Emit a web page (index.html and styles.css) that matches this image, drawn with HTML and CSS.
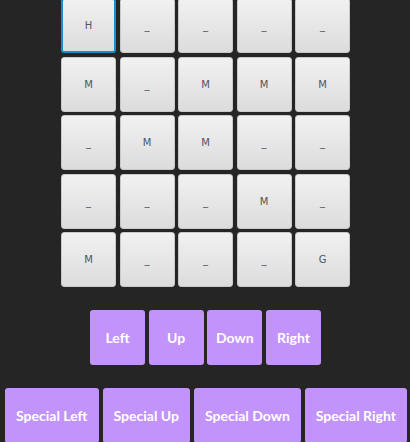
FILE: index.html
```html
<!DOCTYPE html>
<html>
<head>
<meta charset="utf-8">
<link rel="stylesheet" href="styles.css">
</head>
<body>
<div class="app">
  <div class="board">
    <div class="tile active">H</div>
    <div class="tile">_</div>
    <div class="tile">_</div>
    <div class="tile">_</div>
    <div class="tile">_</div>
    <div class="tile">M</div>
    <div class="tile">_</div>
    <div class="tile">M</div>
    <div class="tile">M</div>
    <div class="tile">M</div>
    <div class="tile">_</div>
    <div class="tile">M</div>
    <div class="tile">M</div>
    <div class="tile">_</div>
    <div class="tile">_</div>
    <div class="tile">_</div>
    <div class="tile">_</div>
    <div class="tile">_</div>
    <div class="tile">M</div>
    <div class="tile">_</div>
    <div class="tile">M</div>
    <div class="tile">_</div>
    <div class="tile">_</div>
    <div class="tile">_</div>
    <div class="tile">G</div>
  </div>
  <div class="controls">
    <button class="btn square">Left</button>
    <button class="btn square">Up</button>
    <button class="btn square">Down</button>
    <button class="btn square">Right</button>
  </div>
  <div class="controls special">
    <button class="btn">Special Left</button>
    <button class="btn">Special Up</button>
    <button class="btn">Special Down</button>
    <button class="btn">Special Right</button>
  </div>
</div>
</body>
</html>
```
FILE: styles.css
```css
html, body {
  margin: 0;
  padding: 0;
  background: #252525;
  overflow: hidden;
}
body {
  font-family: Lato, "Liberation Sans", sans-serif;
}
.app {
  display: flex;
  flex-direction: column;
  align-items: center;
  margin-top: -2px;
  gap: 23px;
}
.board {
  display: grid;
  grid-template-columns: repeat(5, 55px);
  grid-auto-rows: 55px;
  gap: 3.5px;
  margin-left: 1px;
}
.tile {
  box-sizing: border-box;
  display: flex;
  align-items: center;
  justify-content: center;
  border: 1px solid #c9c9c9;
  border-radius: 3px;
  background: linear-gradient(#f1f1f1, #dcdcdc);
  color: #4f5662;
  font-size: 10px;
  font-family: "DejaVu Sans", Lato, sans-serif;
}
.tile.active {
  border: 2px solid #1b8dcc;
}
.controls {
  display: flex;
  gap: 3.7px;
  justify-content: center;
  margin-left: 1px;
}
.special {
  gap: 4px;
  margin-left: 2px;
}
.btn {
  box-sizing: border-box;
  height: 55px;
  padding: 0 11px;
  border: none;
  border-radius: 3px;
  background: #c294fb;
  color: #ffffff;
  font-family: Lato, "Liberation Sans", sans-serif;
  font-weight: 700;
  font-size: 14px;
  white-space: nowrap;
}
.btn.square {
  width: 55px;
  padding: 0;
}
```
